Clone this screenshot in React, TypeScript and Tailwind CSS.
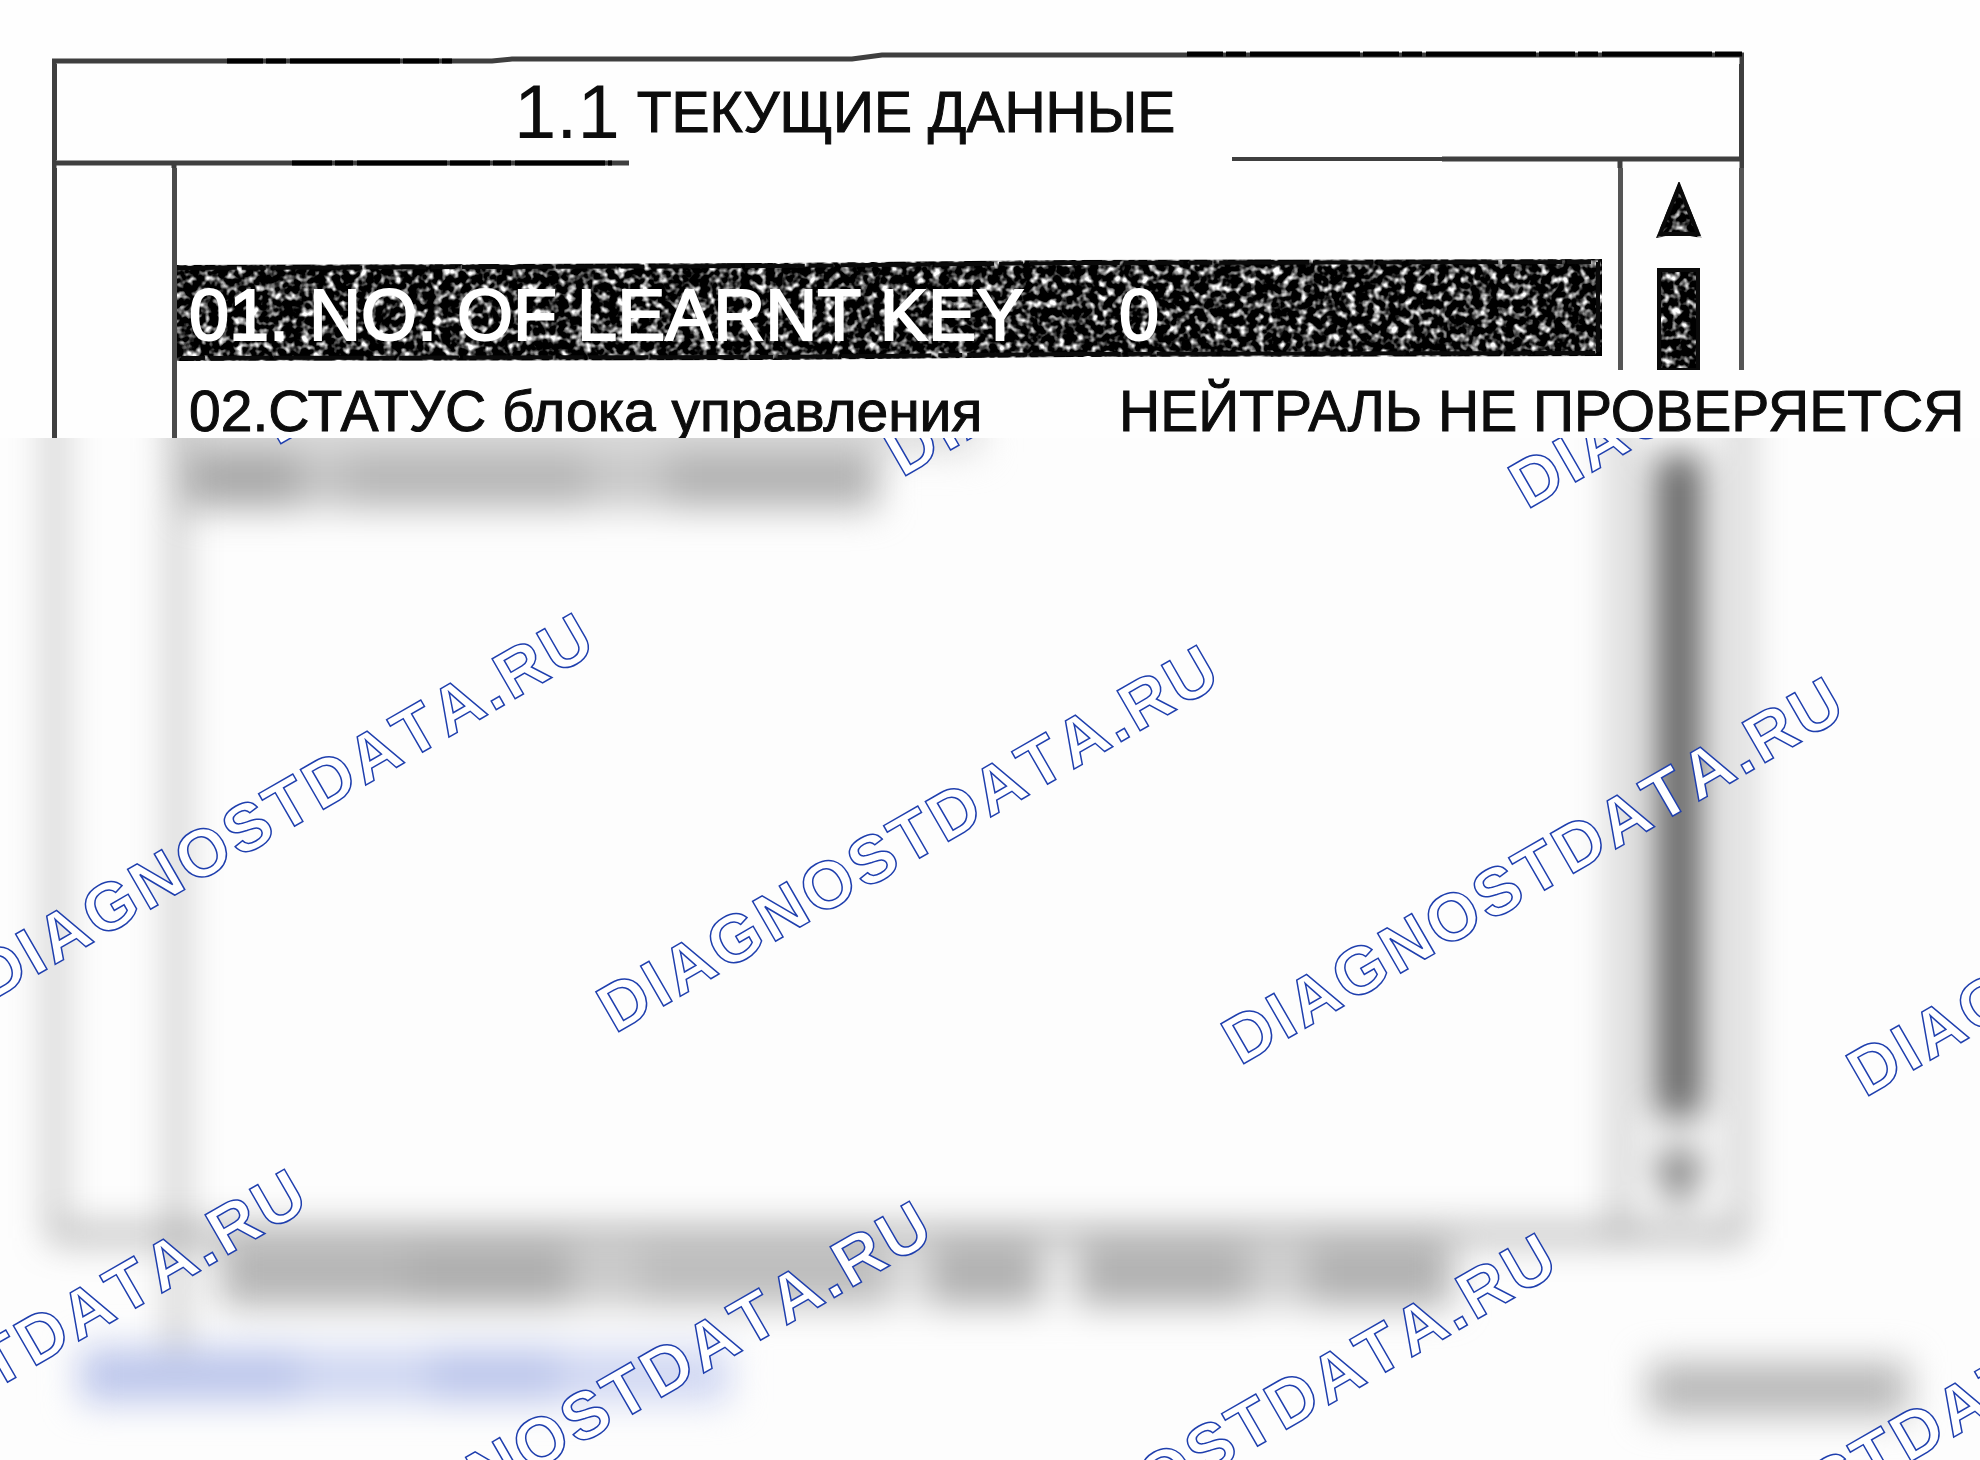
import React from 'react';

const LINE = '#3f3f3f';

// rows of the data list
const rows = [
  { name: '01. NO. OF LEARNT KEY', value: '0', selected: true },
  { name: '02.СТАТУС блока управления', value: 'НЕЙТРАЛЬ НЕ ПРОВЕРЯЕТСЯ', selected: false },
];

// watermark lattice, origins are the text baselines
const marks: { x: number; y: number }[] = [];
for (let row = -1; row <= 1; row++) {
  for (let col = -2; col <= 3; col++) {
    const x = 615 + col * 625 - row * 287;
    const y = 596 + col * 32 + row * 556;
    // skip the ones that never reach the visible area
    if (x > -560 && x < 1960 && y > 0 && y < 1340) {
      marks.push({ x, y });
    }
  }
}

const GrainFilter: React.FC<{ id: string }> = ({ id }) => (
  <filter id={id} x="0" y="0" width="100%" height="100%" colorInterpolationFilters="sRGB">
    <feTurbulence type="fractalNoise" baseFrequency="0.12" numOctaves="2" seed="8" result="noise" />
    <feColorMatrix
      in="noise"
      type="matrix"
      values="3.4 0 0 0 -1.6  3.4 0 0 0 -1.6  3.4 0 0 0 -1.6  0 0 0 0 1"
      result="grain"
    />
    <feComposite in="grain" in2="SourceAlpha" operator="in" />
  </filter>
);

const SelectedBar: React.FC = () => (
  <svg
    className="absolute top-0 left-0 h-[102px] w-full"
    viewBox="0 0 1430 102"
    preserveAspectRatio="none"
    aria-hidden="true"
  >
    <GrainFilter id="grain-bar" />
    <polygon points="0,6 600,4 900,1 1430,0 1430,97 900,98 600,101 0,102" filter="url(#grain-bar)" />
    <path
      d="M0 9 L600 7 L900 4 L1426 3 V94 L900 95 L600 98 L0 99"
      fill="none"
      stroke="#0a0a0a"
      strokeWidth="4"
      strokeDasharray="60 5 24 7 90 4"
    />
  </svg>
);

const ScrollRail: React.FC = () => (
  <div className="flex h-[202px] w-[126px] shrink-0 justify-center border-x-[5px] border-[#555] pr-[4px]">
    <svg className="mt-[14px] h-[188px] w-[46px]" viewBox="0 0 46 188" aria-hidden="true">
      <GrainFilter id="grain-rail" />
      <g filter="url(#grain-rail)">
        <path d="M23 0 L46 56 L34 54 L12 54 L0 56 Z" />
        <rect x="1" y="86" width="43" height="102" />
      </g>
      <path d="M23 4 L42 52 L4 52 Z M3 88 H42 V188 H3 Z" fill="none" stroke="#0a0a0a" strokeWidth="4" />
    </svg>
  </div>
);

const Watermarks: React.FC = () => (
  <svg className="pointer-events-none absolute inset-0 h-full w-full" aria-hidden="true">
    {marks.map((mark) => (
      <text
        key={`${mark.x}-${mark.y}`}
        transform={`translate(${mark.x} ${mark.y}) rotate(-30)`}
        className="fill-white stroke-[#1f3fae] stroke-[1.5px] font-['Liberation_Sans',Arial,sans-serif] text-[67px] font-bold tracking-wider [font-kerning:none]"
      >
        DIAGNOSTDATA.RU
      </text>
    ))}
  </svg>
);

// everything below the second row is hidden behind a blur
const LockedArea: React.FC = () => (
  <section className="relative h-[1022px] overflow-hidden bg-[#fdfdfd]">
    <div className="-mt-10 blur-[18px]">
      <div className="mr-[236px] ml-[52px] flex h-[840px] border-b-[8px] border-l-[6px] border-[#505050]">
        <div className="w-[116px] shrink-0"></div>
        <div className="h-[950px] w-[6px] shrink-0 bg-[#505050]"></div>
        <div className="flex grow flex-col">
          <div className="h-[54px] w-[800px] bg-[#dcdcdc]"></div>
          <div className="ml-2 flex h-[56px] w-[690px]">
            <div className="w-[110px] bg-[#a8a8a8]"></div>
            <div className="w-[50px] bg-[#c4c4c4]"></div>
            <div className="w-[240px] bg-[#b6b6b6]"></div>
            <div className="w-[80px] bg-[#c8c8c8]"></div>
            <div className="grow bg-[#b2b2b2]"></div>
          </div>
        </div>
        <div className="flex w-[126px] shrink-0 flex-col items-center border-x-[6px] border-[#505050] pr-[4px]">
          <div className="mt-[56px] h-[664px] w-[44px] bg-[#585858]"></div>
          <svg className="mt-[36px] h-[58px] w-[44px]" viewBox="0 0 44 58" aria-hidden="true">
            <path d="M0 0 H44 L22 58 Z" fill="#444" />
          </svg>
        </div>
      </div>
      <div className="mt-2 ml-[220px] flex h-[60px] w-[1232px]">
        <div className="w-[190px] bg-[#b4b4b4]"></div>
        <div className="w-[160px] bg-[#acacac]"></div>
        <div className="w-[70px] bg-[#cacaca]"></div>
        <div className="w-[250px] bg-[#bcbcbc]"></div>
        <div className="w-[40px] bg-[#e4e4e4]"></div>
        <div className="w-[112px] bg-[#b0b0b0]"></div>
        <div className="w-[36px] bg-[#f4f4f4]"></div>
        <div className="w-[170px] bg-[#b0b0b0]"></div>
        <div className="w-[60px] bg-[#d0d0d0]"></div>
        <div className="grow bg-[#b0b0b0]"></div>
      </div>
      <div className="mt-[42px] mr-[72px] ml-[80px] flex items-start justify-between">
        <div className="flex h-[54px] w-[650px]">
          <div className="w-[220px] bg-[#bcc6eb]"></div>
          <div className="w-[130px] bg-[#ced6f1]"></div>
          <div className="w-[130px] bg-[#bcc6eb]"></div>
          <div className="grow bg-[#d0d7f2]"></div>
        </div>
        <div className="mt-[14px] h-[54px] w-[260px] bg-[#b8b8b8]"></div>
      </div>
    </div>
    <Watermarks />
  </section>
);

const App: React.FC = () => {
  return (
    <main className="overflow-hidden bg-[#fefefe] pt-[50px] font-['Liberation_Sans',Arial,sans-serif] text-[#0c0c0c]">
      <div className="mr-[236px] ml-[52px]">
        {/* scanned top edge, it climbs a little to the right */}
        <svg className="block h-[14px] w-full" viewBox="0 0 1692 14" preserveAspectRatio="none" aria-hidden="true">
          <path d="M2 14 V11 H440 L460 9 H800 L830 5 H1690 V14" fill="none" stroke={LINE} strokeWidth="5" />
          <path d="M175 11 H400 M1135 4 H1690" fill="none" stroke="#000" strokeWidth="5" strokeDasharray="36 3 20 4 110 3" />
        </svg>
        <header className="flex h-[96px] items-center border-x-[5px] border-[#3f3f3f] pl-[457px]">
          <h1 className="flex items-center gap-[17px] whitespace-nowrap">
            <span className="text-[76px] leading-none">1.1</span>
            <span className="text-[57px] leading-none [-webkit-text-stroke:1px_#0c0c0c]">ТЕКУЩИЕ ДАННЫЕ</span>
          </h1>
        </header>
        {/* divider with a gap under the title, and the tops of the rails */}
        <svg className="-mt-1 block h-[12px] w-full" viewBox="0 0 1692 12" preserveAspectRatio="none" aria-hidden="true">
          <path d="M0 7 H577 M1390 3 H1692" fill="none" stroke={LINE} strokeWidth="5" />
          <path d="M240 7 H560" fill="none" stroke="#000" strokeWidth="5" strokeDasharray="40 3 18 4 90 3" />
          <path d="M1180 3 H1390" fill="none" stroke={LINE} strokeWidth="4" />
          <path d="M2 0 V12 M122 7 V12 M1568 3 V12 M1690 0 V12" fill="none" stroke={LINE} strokeWidth="5" />
        </svg>
      </div>

      <div className="mr-[236px] ml-[52px] flex h-[270px] border-l-[5px] border-[#3f3f3f]">
        <div className="w-[120px] shrink-0 border-r-[5px] border-[#4a4a4a]"></div>
        <div className="relative mt-[91px] mr-[16px] min-w-0 grow">
          <SelectedBar />
          <table className="relative w-full table-fixed text-left whitespace-nowrap">
            <tbody>
              {rows.map((row) => (
                <tr
                  key={row.name}
                  className={
                    row.selected
                      ? 'h-[112px] text-[72px] leading-none text-white [-webkit-text-stroke:2px_white]'
                      : 'h-[80px] text-[57px] leading-none [-webkit-text-stroke:1px_#0c0c0c]'
                  }
                >
                  <th scope="row" className="w-[942px] pl-[12px] font-normal">
                    {row.name}
                  </th>
                  <td>{row.value}</td>
                </tr>
              ))}
            </tbody>
          </table>
        </div>
        <ScrollRail />
      </div>

      <LockedArea />
    </main>
  );
};

export default App;
